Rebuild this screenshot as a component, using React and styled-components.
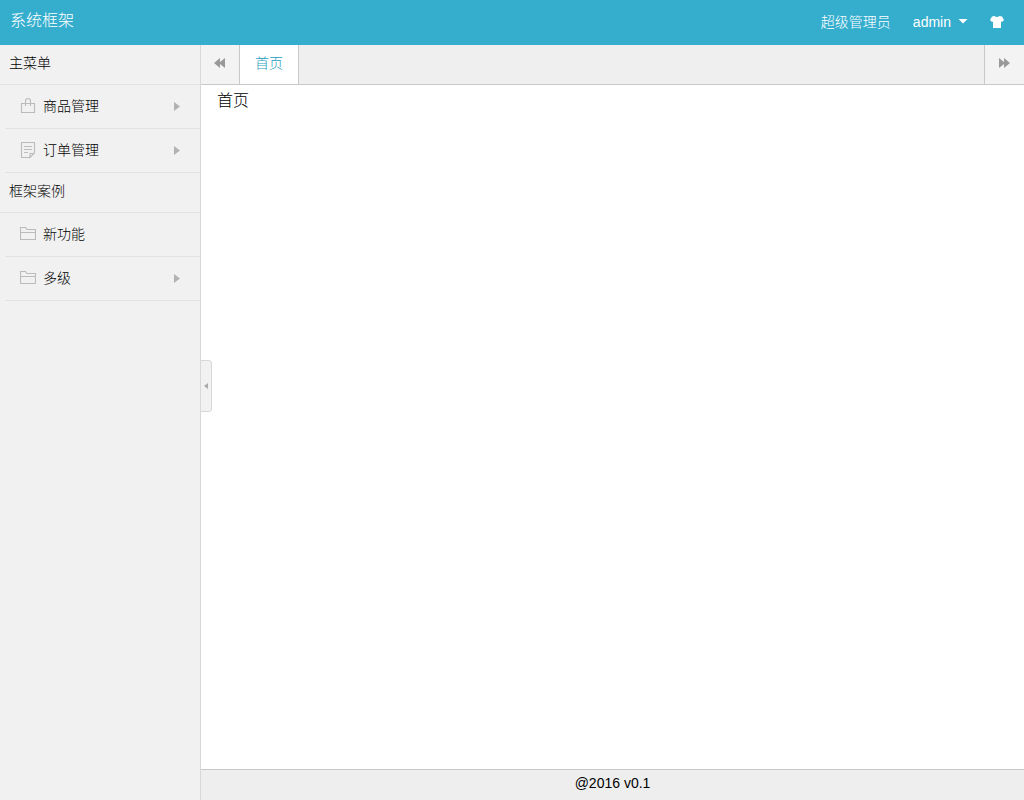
import React, { useState } from "react";
import styled, { createGlobalStyle } from "styled-components";

const GlobalStyle = createGlobalStyle`
  *, *::before, *::after { box-sizing: border-box; }
  body {
    margin: 0;
    background: #fff;
    color: #000;
    font: 14px/20px "Liberation Sans", "Noto Sans CJK SC", sans-serif;
    font-weight: 300;
  }
  button { font: inherit; color: inherit; border: 0; padding: 0; background: none; cursor: pointer; }
  a { color: inherit; text-decoration: none; }
  svg { display: block; flex: none; }
`;

const Page = styled.div`
  display: flex;
  flex-direction: column;
  min-height: 100vh;
`;

const Header = styled.header`
  display: flex;
  align-items: center;
  justify-content: space-between;
  height: 45px;
  padding: 0 20px 4px 10px;
  background: #35aece;
  color: #fff;
`;

const Brand = styled.a`
  font-size: 16px;
`;

const UserNav = styled.nav`
  display: flex;
  align-items: center;
  gap: 22px;
  padding-top: 2px;
`;

const UserButton = styled.button`
  display: flex;
  align-items: center;
  gap: 7px;
`;

const Body = styled.div`
  display: flex;
  flex: 1;
`;

const Sidebar = styled.aside`
  flex: none;
  width: 201px;
  background: #f1f1f1;
  border-right: 1px solid #d8d8d8;
`;

const SectionTitle = styled.h2`
  height: 40px;
  margin: 0;
  padding: 8px 9px;
  border-bottom: 1px solid #e3e3e3;
  font-size: 14px;
  font-weight: 300;
`;

const Menu = styled.ul`
  margin: 0;
  padding: 0 0 0 5px;
  list-style: none;
`;

const MenuLink = styled.a`
  display: flex;
  align-items: center;
  gap: 7px;
  height: 44px;
  padding: 0 20px 1px 15px;
  border-bottom: 1px solid #e3e3e3;
`;

const MenuText = styled.span`
  flex: 1;
`;

const Main = styled.main`
  position: relative;
  display: flex;
  flex: 1;
  flex-direction: column;
  min-width: 0;
`;

const TabBar = styled.div`
  display: flex;
  height: 40px;
  background: #efefef;
  border-bottom: 1px solid #c8c8c8;
`;

const ScrollButton = styled.button`
  display: flex;
  align-items: center;
  justify-content: center;
  width: ${(p) => (p.$end ? 40 : 39)}px;
  padding-bottom: 4px;
  margin-left: ${(p) => (p.$end ? "auto" : 0)};
  background: #f3f3f3;
  border-${(p) => (p.$end ? "left" : "right")}: 1px solid #c8c8c8;
`;

const Tab = styled.button`
  width: 59px;
  padding-bottom: 3px;
  background: #fff;
  border-right: 1px solid #c8c8c8;
  color: #1f9dbf;
`;

const Content = styled.section`
  flex: 1;
  padding: 4px 16px;
  font-size: 16px;
  line-height: 24px;
`;

const Collapse = styled.button`
  position: absolute;
  top: 315px;
  left: -1px;
  display: flex;
  align-items: center;
  justify-content: center;
  width: 12px;
  height: 52px;
  background: #f1f1f1;
  border: 1px solid #d8d8d8;
  border-radius: 0 3px 3px 0;
`;

const Footer = styled.footer`
  height: 31px;
  padding: 3px 0;
  background: #eee;
  border-top: 1px solid #c8c8c8;
  text-align: center;
`;

const BagIcon = () => (
  <svg width="16" height="18" viewBox="0 0 16 18" fill="none" stroke="#bbb" strokeWidth="1.1">
    <path d="M1.5 6.5h13v9h-13z" />
    <path d="M5.5 9V4.2Q5.5 1.5 8 1.5t2.5 2.7V9" />
  </svg>
);

const NoteIcon = () => (
  <svg width="16" height="18" viewBox="0 0 16 18" fill="none" stroke="#bbb" strokeWidth="1.1">
    <path d="M10 16.5H1.5v-15h13v10.5L10 16.5v-4h4.5M4 5.5h8M4 8.5h8M4 11.5h4" />
  </svg>
);

const FolderIcon = () => (
  <svg width="16" height="18" viewBox="0 0 16 18" fill="none" stroke="#bbb" strokeWidth="1.1">
    <path d="M.5 14.5v-12h5l1.5 2h8.5v10zM.5 7.5h15" />
  </svg>
);

const Triangle = () => (
  <svg width="6" height="10" viewBox="0 0 6 10" fill="#b2b2b2">
    <path d="M0 1l6 4.5-6 4.5z" />
  </svg>
);

const Caret = () => (
  <svg width="10" height="5" viewBox="0 0 10 5" fill="#fff">
    <path d="M.5 0h9L5 4.5z" />
  </svg>
);

const ShirtIcon = () => (
  <svg width="14" height="12" viewBox="0 0 14 12" fill="#fff">
    <path d="M4.5 0Q7 2.2 9.5 0L12 .6 14 4l-2 2-1-.6V12H3V5.4L2 6 0 4 2 .6z" />
  </svg>
);

const DoubleArrow = ({ forward }) => (
  <svg width="12" height="10" viewBox="0 0 12 10" fill="#999">
    <path d={forward ? "M0 0l5 4V0l6 5-6 5V6l-5 4z" : "M11 0L6 4V0L0 5l6 5V6l5 4z"} />
  </svg>
);

const MiniArrow = () => (
  <svg width="4" height="6" viewBox="0 0 4 6" fill="#aaa">
    <path d="M4 0v6L0 3z" />
  </svg>
);

const sections = [
  {
    title: "主菜单",
    items: [
      { label: "商品管理", Icon: BagIcon, nested: true },
      { label: "订单管理", Icon: NoteIcon, nested: true },
    ],
  },
  {
    title: "框架案例",
    items: [
      { label: "新功能", Icon: FolderIcon },
      { label: "多级", Icon: FolderIcon, nested: true },
    ],
  },
];

export default function App() {
  const [open, setOpen] = useState(true);
  return (
    <Page>
      <GlobalStyle />
      <Header>
        <Brand href="#">系统框架</Brand>
        <UserNav>
          <span>超级管理员</span>
          <UserButton>admin<Caret /></UserButton>
          <UserButton aria-label="主题"><ShirtIcon /></UserButton>
        </UserNav>
      </Header>
      <Body>
        {open && (
          <Sidebar>
            {sections.map(({ title, items }) => (
              <nav key={title} aria-label={title}>
                <SectionTitle>{title}</SectionTitle>
                <Menu>
                  {items.map(({ label, Icon, nested }) => (
                    <li key={label}>
                      <MenuLink href="#">
                        <Icon />
                        <MenuText>{label}</MenuText>
                        {nested && <Triangle />}
                      </MenuLink>
                    </li>
                  ))}
                </Menu>
              </nav>
            ))}
          </Sidebar>
        )}
        <Main>
          <TabBar>
            <ScrollButton aria-label="向左"><DoubleArrow /></ScrollButton>
            <Tab>首页</Tab>
            <ScrollButton $end aria-label="向右"><DoubleArrow forward /></ScrollButton>
          </TabBar>
          <Content>首页</Content>
          <Collapse aria-label="收起菜单" onClick={() => setOpen(!open)}><MiniArrow /></Collapse>
          <Footer>@2016 v0.1</Footer>
        </Main>
      </Body>
    </Page>
  );
}
